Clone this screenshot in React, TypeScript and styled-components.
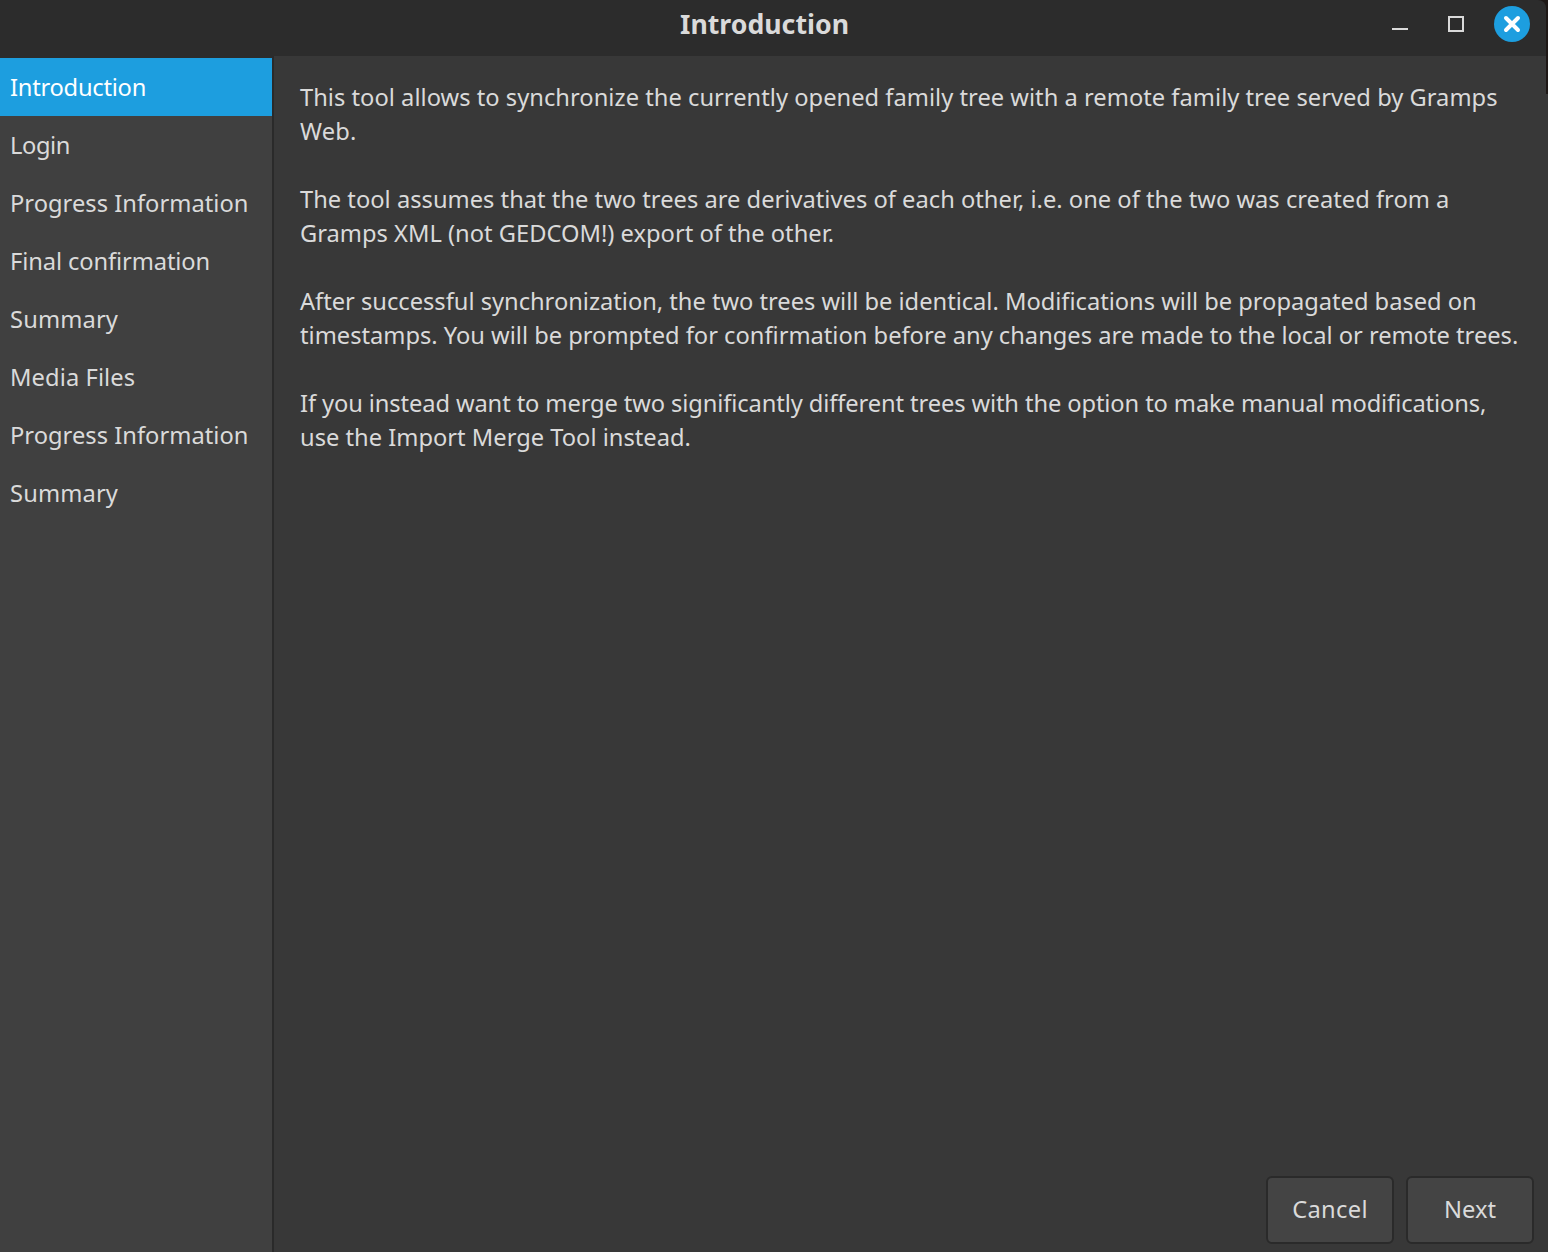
import styled, { createGlobalStyle } from "styled-components";

const Global = createGlobalStyle`
  html, body {
    margin: 0;
    padding: 0;
    background: #383838;
  }
  body {
    font-family: "Noto Sans", sans-serif;
    overflow: hidden;
  }
`;
const Window = styled.div`
  width: 1548px;
  height: 1252px;
  display: flex;
  flex-direction: column;
  position: relative;
  color: #dadada;
  background: #383838;
`;
const TitleBack = styled.div`
  flex: none;
  padding-right: 2px;
  background: #1e1816;
`;
const TitleBar = styled.div`
  height: 56px;
  display: flex;
  align-items: center;
  justify-content: center;
  position: relative;
  background: #2c2c2c;
  box-sizing: border-box;
  padding: 0 17px 10px 0;
  border-top-right-radius: 8px;
`;
const Title = styled.div`
  font-size: 26.7px;
  font-weight: 700;
  color: #dadada;
`;
const Controls = styled.div`
  position: absolute;
  right: 16px;
  top: 6px;
  display: flex;
  align-items: center;
  gap: 20px;
`;
const CtlIcon = styled.svg`
  width: 36px;
  height: 36px;
  display: block;
`;
const Body = styled.div`
  flex: 1;
  display: flex;
  min-height: 0;
`;
const Sidebar = styled.div`
  width: 272px;
  flex: none;
  padding-top: 2px;
  background: linear-gradient(#2c2c2c 2px, #404040 2px);
  border-right: 2px solid #2a2a2a;
`;
const Step = styled.div<{ $active?: boolean; $spacing: number }>`
  height: 58px;
  display: flex;
  align-items: center;
  padding-left: 10px;
  box-sizing: border-box;
  font-size: 23.7px;
  letter-spacing: ${(p) => p.$spacing}px;
  color: ${(p) => (p.$active ? "#ffffff" : "#dadada")};
  background: ${(p) => (p.$active ? "#1d9edf" : "transparent")};
`;
const Main = styled.div`
  flex: 1;
  min-width: 0;
  display: flex;
  flex-direction: column;
`;
const Content = styled.div`
  flex: 1;
  padding: 24px 26px 0;
`;
const Para = styled.p`
  margin: 0 0 34px;
  font-size: 23.7px;
  line-height: 34px;
  white-space: nowrap;
`;
const Line = styled.span<{ $spacing?: number }>`
  display: block;
  letter-spacing: ${(p) => p.$spacing ?? 0}px;
`;
const Actions = styled.div`
  display: flex;
  justify-content: flex-end;
  gap: 12px;
  padding: 0 14px 8px 0;
`;
const Button = styled.div<{ $spacing?: number }>`
  width: 128px;
  height: 68px;
  box-sizing: border-box;
  display: flex;
  align-items: center;
  justify-content: center;
  padding-bottom: 2px;
  font-size: 23.7px;
  letter-spacing: ${(p) => p.$spacing ?? 0}px;
  background: #444444;
  border: 2px solid #2a2a2a;
  border-radius: 6px;
`;
// sliver of what's behind the window, top right
const EdgeStrip = styled.div`
  position: absolute;
  top: 0;
  right: 0;
  width: 2px;
  height: 94px;
  background: #1e1816;
`;

const steps = [
  { label: "Introduction", spacing: -0.25 },
  { label: "Login", spacing: -0.4 },
  { label: "Progress Information", spacing: 0.02 },
  { label: "Final confirmation", spacing: -0.11 },
  { label: "Summary", spacing: 0.14 },
  { label: "Media Files", spacing: 0.09 },
  { label: "Progress Information", spacing: 0.02 },
  { label: "Summary", spacing: 0.14 },
];

export default function App() {
  return (
    <Window>
      <Global />
      <TitleBack>
        <TitleBar>
          <Title>Introduction</Title>
          <Controls>
            <CtlIcon viewBox="0 0 36 36">
              <rect x="10" y="22" width="16" height="2" fill="#dadada" />
            </CtlIcon>
            <CtlIcon viewBox="0 0 36 36">
              <rect x="11" y="11" width="14" height="14" fill="none" stroke="#dadada" strokeWidth="2" />
            </CtlIcon>
            <CtlIcon viewBox="0 0 36 36">
              <circle cx="18" cy="18" r="18" fill="#1d9edf" />
              <path d="M12 12 L24 24 M24 12 L12 24" stroke="#ffffff" strokeWidth="4" strokeLinecap="round" />
            </CtlIcon>
          </Controls>
        </TitleBar>
      </TitleBack>
      <Body>
        <Sidebar>
          {steps.map((s, i) => (
            <Step key={i} $active={i === 0} $spacing={s.spacing}>
              {s.label}
            </Step>
          ))}
        </Sidebar>
        <Main>
          <Content>
            <Para>
              <Line $spacing={0.02}>
                This tool allows to synchronize the currently opened family tree with a remote family tree served by Gramps
              </Line>
              <Line $spacing={0.2}>Web.</Line>
            </Para>
            <Para>
              <Line $spacing={0.01}>
                The tool assumes that the two trees are derivatives of each other, i.e. one of the two was created from a
              </Line>
              <Line>Gramps XML (not GEDCOM!) export of the other.</Line>
            </Para>
            <Para>
              <Line $spacing={-0.02}>
                After successful synchronization, the two trees will be identical. Modifications will be propagated based on
              </Line>
              <Line $spacing={-0.01}>
                timestamps. You will be prompted for confirmation before any changes are made to the local or remote trees.
              </Line>
            </Para>
            <Para>
              <Line $spacing={-0.11}>
                If you instead want to merge two significantly different trees with the option to make manual modifications,
              </Line>
              <Line>use the Import Merge Tool instead.</Line>
            </Para>
          </Content>
          <Actions>
            <Button $spacing={0.33}>Cancel</Button>
            <Button>Next</Button>
          </Actions>
        </Main>
      </Body>
      <EdgeStrip />
    </Window>
  );
}
